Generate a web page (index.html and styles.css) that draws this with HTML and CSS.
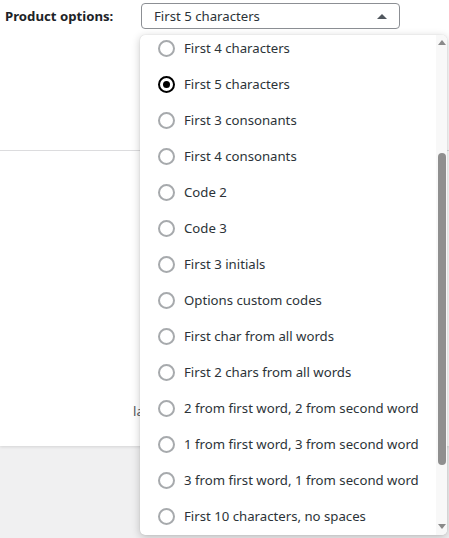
FILE: index.html
```html
<!DOCTYPE html>
<html>
<head>
<meta charset="utf-8">
<link rel="stylesheet" href="styles.css">
</head>
<body>
<div class="card">
  <div class="field-row">
    <label class="field-label">Product options:</label>
    <div class="select">
      <span class="select-value">First 5 characters</span>
      <span class="select-arrow"></span>
    </div>
  </div>
  <div class="divider"></div>
  <div class="hint-row"><span class="hint">label</span></div>
</div>
<div class="dropdown">
  <ul class="options">
    <li class="option"><span class="radio"></span>First 4 characters</li>
    <li class="option"><span class="radio checked"></span>First 5 characters</li>
    <li class="option"><span class="radio"></span>First 3 consonants</li>
    <li class="option"><span class="radio"></span>First 4 consonants</li>
    <li class="option"><span class="radio"></span>Code 2</li>
    <li class="option"><span class="radio"></span>Code 3</li>
    <li class="option"><span class="radio"></span>First 3 initials</li>
    <li class="option"><span class="radio"></span>Options custom codes</li>
    <li class="option"><span class="radio"></span>First char from all words</li>
    <li class="option"><span class="radio"></span>First 2 chars from all words</li>
    <li class="option"><span class="radio"></span>2 from first word, 2 from second word</li>
    <li class="option"><span class="radio"></span>1 from first word, 3 from second word</li>
    <li class="option"><span class="radio"></span>3 from first word, 1 from second word</li>
    <li class="option"><span class="radio"></span>First 10 characters, no spaces</li>
  </ul>
  <div class="scrollbar">
    <span class="sb-up"></span>
    <span class="sb-thumb"></span>
    <span class="sb-down"></span>
  </div>
</div>
</body>
</html>
```
FILE: styles.css
```css
html, body {
  margin: 0;
  padding: 0;
}
body {
  background: #f0f0f1;
  font-family: "Noto Sans", "Segoe UI", sans-serif;
  font-size: 13.2px;
  color: #1d2327;
  width: 449px;
  height: 538px;
  overflow: hidden;
  position: relative;
}
.card {
  background: #fff;
  height: 446px;
  box-shadow: 0 1px 3px rgba(0,0,0,0.12);
  display: flex;
  flex-direction: column;
}
.field-row {
  display: flex;
  align-items: center;
  height: 32px;
  padding-left: 5px;
}
.field-label {
  font-weight: 700;
  width: 136px;
  color: #1d2327;
}
.select {
  height: 26px;
  border: 1px solid #8c8f94;
  border-radius: 4px;
  display: flex;
  align-items: center;
  justify-content: space-between;
  padding: 0 12px;
  box-sizing: border-box;
  width: 259px;
}
.select-value {
  color: #2c3338;
}
.select-arrow {
  width: 0;
  height: 0;
  border-left: 5px solid transparent;
  border-right: 5px solid transparent;
  border-bottom: 5px solid #50575e;
}
.divider {
  margin-top: 118px;
  height: 1px;
  background: #dcdcde;
}
.hint-row {
  margin-top: 251px;
  padding-left: 133px;
}
.hint {
  color: #50575e;
}
.dropdown {
  position: absolute;
  left: 140px;
  top: 35px;
  width: 307px;
  height: 500px;
  background: #fff;
  border-radius: 5px;
  box-shadow: 0 2px 8px rgba(0,0,0,0.22), 0 0 1px rgba(0,0,0,0.2);
  overflow: hidden;
  display: flex;
}
.options {
  list-style: none;
  margin: -5px 0 0 0;
  padding: 0;
  flex: 1;
}
.option {
  height: 36px;
  display: flex;
  align-items: center;
  padding-left: 18px;
  color: #2c3338;
  white-space: nowrap;
}
.radio {
  width: 17px;
  height: 17px;
  box-sizing: border-box;
  border: 2px solid #a7aaad;
  border-radius: 50%;
  margin-right: 9px;
  flex: none;
  display: flex;
  align-items: center;
  justify-content: center;
}
.radio.checked {
  border-color: #000;
}
.radio.checked::after {
  content: "";
  width: 7px;
  height: 7px;
  border-radius: 50%;
  background: #000;
}
.scrollbar {
  width: 11px;
  background: #f8f8f8;
  display: flex;
  flex-direction: column;
  align-items: center;
}
.sb-up {
  margin-top: 5px;
  width: 0;
  height: 0;
  border-left: 4px solid transparent;
  border-right: 4px solid transparent;
  border-bottom: 5px solid #8a8a8a;
}
.sb-thumb {
  margin-top: 108px;
  width: 8px;
  height: 312px;
  border-radius: 4px;
  background: #8f8f8f;
}
.sb-down {
  margin-top: auto;
  margin-bottom: 6px;
  width: 0;
  height: 0;
  border-left: 4px solid transparent;
  border-right: 4px solid transparent;
  border-top: 5px solid #8a8a8a;
}
```
